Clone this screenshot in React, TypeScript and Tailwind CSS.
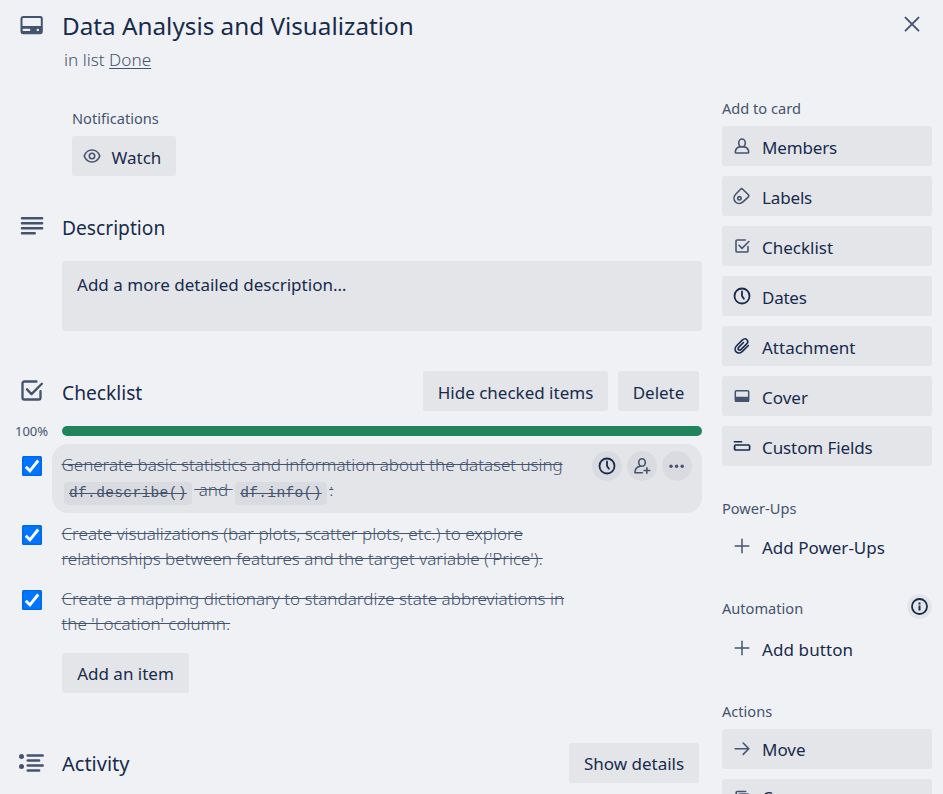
import type { ReactNode } from "react";

type IconProps = { className?: string };

const stroke = {
  fill: "none",
  stroke: "currentColor",
  strokeWidth: 1.6,
  strokeLinecap: "round" as const,
  strokeLinejoin: "round" as const,
};

const CardIcon = () => (
  <svg width="30" height="30" viewBox="0.5 0 30 30" className="text-[#44546f]">
    <path
      fill="currentColor"
      fillRule="evenodd"
      d="M6.5 6h17A2.600 2.600 0 0 1 26.300 8.600v13.300A2.600 2.600 0 0 1 23.700 24.200h-17A2.600 2.600 0 0 1 4 21.900V8.600A2.600 2.600 0 0 1 6.500 6ZM6.800 7.900a.8.8 0 0 0-.8.8v7.300h18.300V8.700a.8.8 0 0 0-.8-.8ZM7.100 18.800a1 1 0 0 0 0 2.200h5.700a1 1 0 0 0 0-2.200ZM21.300 18.700a1.200 1.200 0 1 0 0 2.400 1.200 1.200 0 0 0 0-2.400Z"
    />
  </svg>
);

const DescriptionIcon = () => (
  <svg width="30" height="30" viewBox="0 -0.8 30 30" className="text-[#44546f]">
    <path {...stroke} strokeWidth="2.5" d="M5 6.500h20.100M5 11.500h20.100M5 16.500h20.100M5 21.500h12.700" />
  </svg>
);

const ChecklistIcon = ({ className = "" }: IconProps) => (
  <svg viewBox="0 0 24 24" className={`text-[#44546f] ${className}`}>
    <path {...stroke} strokeWidth="2.1" d="M16.400 4H5.500A1.500 1.500 0 0 0 4 5.500v13A1.500 1.500 0 0 0 5.500 20h13a1.500 1.500 0 0 0 1.500-1.500V12.600M8 11l4 4.200L21.200 6" />
  </svg>
);

const ActivityIcon = () => (
  <svg width="30" height="30" viewBox="0 0 30 30" className="text-[#44546f]">
    <circle cx="4.500" cy="8.500" r="2.500" fill="currentColor" />
    <circle cx="4.500" cy="18.500" r="2.500" fill="currentColor" />
    <path {...stroke} strokeWidth="2.500" d="M10.700 7.400h15M10.700 12.400h11.400M10.700 17.400h15M10.700 22.400h11.400" />
  </svg>
);

const EyeIcon = () => (
  <svg width="20" height="20" viewBox="0 0 20 20" className="text-[#44546f]">
    <path {...stroke} strokeWidth="1.600" d="M2.200 10C3.600 6.300 6.500 4 10 4s6.400 2.300 7.800 6c-1.400 3.700-4.300 6-7.800 6s-6.400-2.300-7.800-6Z" />
    <circle {...stroke} strokeWidth="1.600" cx="10" cy="10" r="2.700" />
  </svg>
);

const MemberIcon = () => (
  <svg width="20" height="20" viewBox="0 0 20 20" className="text-[#44546f]">
    <path {...stroke} d="M10 10.600c4 0 6.400 2 6.700 5.200.1.800-.4 1.200-1.100 1.200H4.400c-.7 0-1.200-.4-1.100-1.200C3.600 12.600 6 10.600 10 10.600Z" />
    <ellipse cx="10" cy="6.900" rx="3.300" ry="3.900" {...stroke} fill="#e4e5e9" />
  </svg>
);

const LabelIcon = () => (
  <svg width="20" height="20" viewBox="0 0 20 20" className="text-[#44546f]">
    <path {...stroke} strokeWidth="1.600" d="M8.600 3.200a1.500 1.500 0 0 1 2.100 0l5.700 5.600a1.500 1.500 0 0 1 0 2.100l-5.100 4.800c-2.600 2.400-5.900 2.200-7.800.3-2-2-2.100-5.200.2-7.700Z" />
    <circle {...stroke} strokeWidth="1.600" cx="7.400" cy="12.300" r="1.700" />
  </svg>
);

const ClockIcon = () => (
  <svg width="20" height="20" viewBox="0 0 20 20" className="text-[#172b4d]">
    <circle {...stroke} strokeWidth="1.800" cx="10" cy="10" r="7.500" />
    <path {...stroke} strokeWidth="1.800" d="M10 5.400V10l1.900 2.800" />
  </svg>
);

const AttachmentIcon = () => (
  <svg width="20" height="20" viewBox="0 0 20 20" className="text-[#172b4d]">
    <path {...stroke} strokeWidth="1.600" d="m16.400 9.500-6 5.900c-1.900 1.900-4.600 2.100-6.200.5s-1.400-4.200.4-6.100l5.700-5.700c1.500-1.400 3.400-1.600 4.600-.4s1 3-.4 4.400l-5.400 5.300c-.9.900-1.900 1-2.600.3s-.6-1.700.3-2.600l4.700-4.600" />
  </svg>
);

const CoverIcon = () => (
  <svg width="20" height="20" viewBox="0 0 20 20" className="text-[#44546f]">
    <rect {...stroke} x="3.300" y="4.700" width="13.400" height="10.600" rx="1" strokeWidth="1.500" />
    <path fill="currentColor" d="M3 10.800h14v4.500a.7.7 0 0 1-.7.700H3.700a.7.7 0 0 1-.7-.7Z" />
  </svg>
);

const FieldsIcon = () => (
  <svg width="20" height="20" viewBox="0 0 20 20" className="text-[#172b4d]">
    <path {...stroke} strokeWidth="1.600" d="M2.400 5.700h7.200" />
    <rect {...stroke} strokeWidth="1.700" x="2.600" y="9" width="15" height="5" rx="1" />
  </svg>
);

const PlusIcon = () => (
  <svg width="20" height="20" viewBox="0 0 20 20" className="text-[#44546f]">
    <path {...stroke} strokeWidth="1.500" d="M10 3.300v13.400M3.200 10h13.600" />
  </svg>
);

const ArrowIcon = () => (
  <svg width="20" height="20" viewBox="0 0 20 20" className="text-[#44546f]">
    <path {...stroke} d="M3.200 9.700h13.400M11.200 4l5.600 5.700-5.600 5.700" />
  </svg>
);

const CopyIcon = () => (
  <svg width="20" height="20" viewBox="0 0.5 20 20" className="text-[#44546f]">
    <path {...stroke} d="M4.200 12.500V4a1 1 0 0 1 1-1h8.500M7 16V6.500a1 1 0 0 1 1-1h7.500a1 1 0 0 1 1 1V16" />
  </svg>
);

const AddMemberIcon = () => (
  <svg width="20" height="20" viewBox="0 0 20 20" className="text-[#44546f]">
    <ellipse {...stroke} cx="10" cy="6.500" rx="3.300" ry="3.700" />
    <path {...stroke} d="M8.200 10.300C5 10.900 3 13.300 2.900 16.800h7.400M14.900 11.700v5.600M12.100 14.500h5.600" />
  </svg>
);

const DotsIcon = () => (
  <svg width="20" height="20" viewBox="0 0 20 20" className="text-[#44546f]">
    <circle cx="4" cy="10.200" r="1.700" fill="currentColor" />
    <circle cx="9.600" cy="10.200" r="1.700" fill="currentColor" />
    <circle cx="15.200" cy="10.200" r="1.700" fill="currentColor" />
  </svg>
);

const Checkbox = () => (
  <svg width="20" height="20" viewBox="0 0 20 20" role="checkbox" aria-checked="true">
    <rect width="20" height="20" rx="1.500" fill="#0069e5" />
    <rect x="1.500" y="1.500" width="17" height="17" rx="1" fill="#0075ff" />
    <path d="m3.800 10.700 4.100 4.100 8.300-10.300" fill="none" stroke="#fff" strokeWidth="2.900" />
  </svg>
);

function Button({ children, className = "pt-[3px]" }: { children: ReactNode; className?: string }) {
  return (
    <button className={`flex h-10 shrink-0 items-center justify-center whitespace-nowrap rounded-[3px] bg-[#e4e5e9] text-[17px] text-[#172b4d] ${className}`}>
      {children}
    </button>
  );
}

function SideButton({ icon, label, plain, className = "pt-[3px]" }: { icon: ReactNode; label: string; plain?: boolean; className?: string }) {
  return (
    <button className={`flex h-10 w-full shrink-0 items-center gap-[10.5px] rounded-[3px] pl-[9.5px] text-left text-[17px] whitespace-nowrap text-[#172b4d] ${plain ? "" : "bg-[#e4e5e9]"}`}>
      <span className="flex size-5 shrink-0 items-center justify-center">{icon}</span>
      <span className={className}>{label}</span>
    </button>
  );
}

function SectionHeader({ icon, title, className = "", children }: { icon: ReactNode; title: string; className?: string; children?: ReactNode }) {
  return (
    <header className="flex h-10 items-center">
      <span className="flex w-[62px] shrink-0 pl-[17px]">{icon}</span>
      <h2 className={`text-[#172b4d] ${className}`}>{title}</h2>
      <div className="ml-auto flex gap-[10px] pr-[3px]">{children}</div>
    </header>
  );
}

function Item({ children, className = "", actions }: { children: ReactNode; className?: string; actions?: ReactNode }) {
  return (
    <li className={`flex items-start ${className}`}>
      <span className="mt-3 ml-[22px] w-[30px] shrink-0"><Checkbox /></span>
      <div className={`flex h-full w-[650px] items-start rounded-[16px] pt-2 pl-[9.5px] ${actions ? "bg-[#e4e5e9]" : ""}`}>
        <p className="w-[530.5px] whitespace-nowrap text-[17.05px] leading-[25px] font-light text-[#44546f] line-through">{children}</p>
        {actions}
      </div>
    </li>
  );
}

const Code = ({ children }: { children: ReactNode }) => (
  <code className="mx-[2px] inline-block h-[23px] rounded-[4px] bg-[#d9dbe0] px-[5.5px] align-[-1px] font-['Liberation_Mono',monospace] text-[14.500px] leading-[23px] font-normal tracking-[0.36px] text-[#44546f] line-through decoration-1">{children}</code>
);

const Round = ({ children }: { children: ReactNode }) => (
  <span className="flex size-[30px] items-center justify-center rounded-full bg-[#d9dbe0]">{children}</span>
);

const labelCls = "h-5 text-[14.600px] leading-5 text-[#44546f]";

export default function App() {
  return (
    <div className="relative flex h-[794px] w-[943px] overflow-hidden bg-[#f0f1f4] font-['Noto_Sans','Open_Sans',sans-serif]">
      <main className="w-[702px] shrink-0">
        <div className="flex h-[50px] items-center">
          <span className="w-[62px] shrink-0 pl-[17px]"><CardIcon /></span>
          <h1 className="pt-[2px] text-[24.27px] leading-8 whitespace-nowrap text-[#172b4d]">Data Analysis and Visualization</h1>
        </div>
        <p className="h-5 pl-[64px] text-[17.2px] leading-5 font-light text-[#44546f]">
          in list <span className="underline underline-offset-2">Done</span>
        </p>

        <section className="mt-[38px] pl-[72px]">
          <h3 className={labelCls}>Notifications</h3>
          <button className="mt-2 flex h-10 w-[104px] items-center gap-[10px] rounded-[3px] bg-[#e4e5e9] pl-[9.5px] text-[17px] text-[#172b4d]">
            <EyeIcon />
            <span className="pt-[3px]">Watch</span>
          </button>
        </section>

        <section className="mt-[30px]">
          <SectionHeader icon={<DescriptionIcon />} title="Description" className="pt-[5px] text-[19.2px]" />
          <div className="mt-[15px] ml-[62px] h-[70px] rounded-[3px] bg-[#e4e5e9] pt-[12px] pl-[15px] text-[17.05px] leading-6 text-[#172b4d]">
            Add a more detailed description…
          </div>
        </section>

        <section className="mt-10">
          <SectionHeader icon={<ChecklistIcon className="mb-px ml-px size-[27px]" />} title="Checklist" className="pt-[5px] text-[19.2px]">
            <Button className="w-[185px] pt-[3px]">Hide checked items</Button>
            <Button className="w-[81px] pt-[3px]">Delete</Button>
          </SectionHeader>
          <div className="mt-[10px] flex h-5 items-center">
            <span className="w-[62px] shrink-0 pt-[2px] pl-[15px] text-[13px] text-[#44546f]">100%</span>
            <div className="h-[10px] flex-1 rounded-full bg-[#1f845a]" />
          </div>
          <ul className="mt-[3px]">
            <Item
              className="h-[69px]"
              actions={
                <div className="-mt-[1px] flex gap-[5px]">
                  <Round><ClockIcon /></Round>
                  <Round><AddMemberIcon /></Round>
                  <Round><DotsIcon /></Round>
                </div>
              }
            >
              <span className="tracking-[-0.04px]">Generate basic statistics and information about the dataset using</span>
              <br />
              <Code>df.describe()</Code> and <Code>df.info()</Code>:
            </Item>
            <Item className="h-[65px]">
              Create visualizations (bar plots, scatter plots, etc.) to explore
              <br />
              relationships between features and the target variable ('Price').
            </Item>
            <Item className="h-[65px]">
              Create a mapping dictionary to standardize state abbreviations in
              <br />
              the 'Location' column.
            </Item>
          </ul>
          <Button className="mt-[10px] ml-[62px] w-[127px] pt-[1px]">Add an item</Button>
        </section>

        <section className="mt-[50px]">
          <SectionHeader icon={<ActivityIcon />} title="Activity" className="pt-[1px] text-[20px]">
            <Button className="w-[130px] pt-[1px]">Show details</Button>
          </SectionHeader>
        </section>
      </main>

      <aside className="ml-5 w-[210px] shrink-0 pt-[98px]">
        <h3 className={labelCls}>Add to card</h3>
        <div className="mt-2 flex flex-col gap-[10px]">
          <SideButton icon={<MemberIcon />} label="Members" className="pt-[3px] tracking-[-0.15px]" />
          <SideButton icon={<LabelIcon />} label="Labels" className="pt-[3px] tracking-[-0.15px]" />
          <SideButton icon={<ChecklistIcon className="size-[18px]" />} label="Checklist" />
          <SideButton icon={<ClockIcon />} label="Dates" className="pt-[3px] tracking-[-0.25px]" />
          <SideButton icon={<AttachmentIcon />} label="Attachment" />
          <SideButton icon={<CoverIcon />} label="Cover" />
          <SideButton icon={<FieldsIcon />} label="Custom Fields" className="pt-[3px] tracking-[-0.1px]" />
        </div>

        <h3 className={`mt-8 ${labelCls}`}>Power-Ups</h3>
        <div className="mt-2">
          <SideButton plain icon={<PlusIcon />} label="Add Power-Ups" />
        </div>

        <div className="mt-7 flex h-[25px] items-center justify-between">
          <h3 className={`pt-[1px] ${labelCls}`}>Automation</h3>
          <span className="flex size-[25px] items-center justify-center rounded-full bg-[#e4e5e9] text-[#172b4d]">
            <svg width="20" height="20" viewBox="0.5 0.5 20 20">
              <circle {...stroke} strokeWidth="1.800" cx="10" cy="10" r="7.500" />
              <path d="M9 9h2v5H9zM9 6h2v2H9z" fill="currentColor" />
            </svg>
          </span>
        </div>
        <div className="mt-[9px]">
          <SideButton plain icon={<PlusIcon />} label="Add button" className="pt-[3px] tracking-[0.1px]" />
        </div>

        <h3 className={`mt-[33px] ${labelCls}`}>Actions</h3>
        <div className="mt-2 flex flex-col gap-[10px]">
          <SideButton icon={<ArrowIcon />} label="Move" className="pt-[1px]" />
          <SideButton icon={<CopyIcon />} label="Copy" className="pb-[2px]" />
        </div>
      </aside>

      <button aria-label="Close" className="absolute top-[14px] right-[21.5px] text-[#44546f]">
        <svg width="20" height="20" viewBox="0 0 20 20">
          <path {...stroke} strokeWidth="1.900" d="m3.500 3.600 13 13M16.500 3.600l-13 13" />
        </svg>
      </button>
    </div>
  );
}
